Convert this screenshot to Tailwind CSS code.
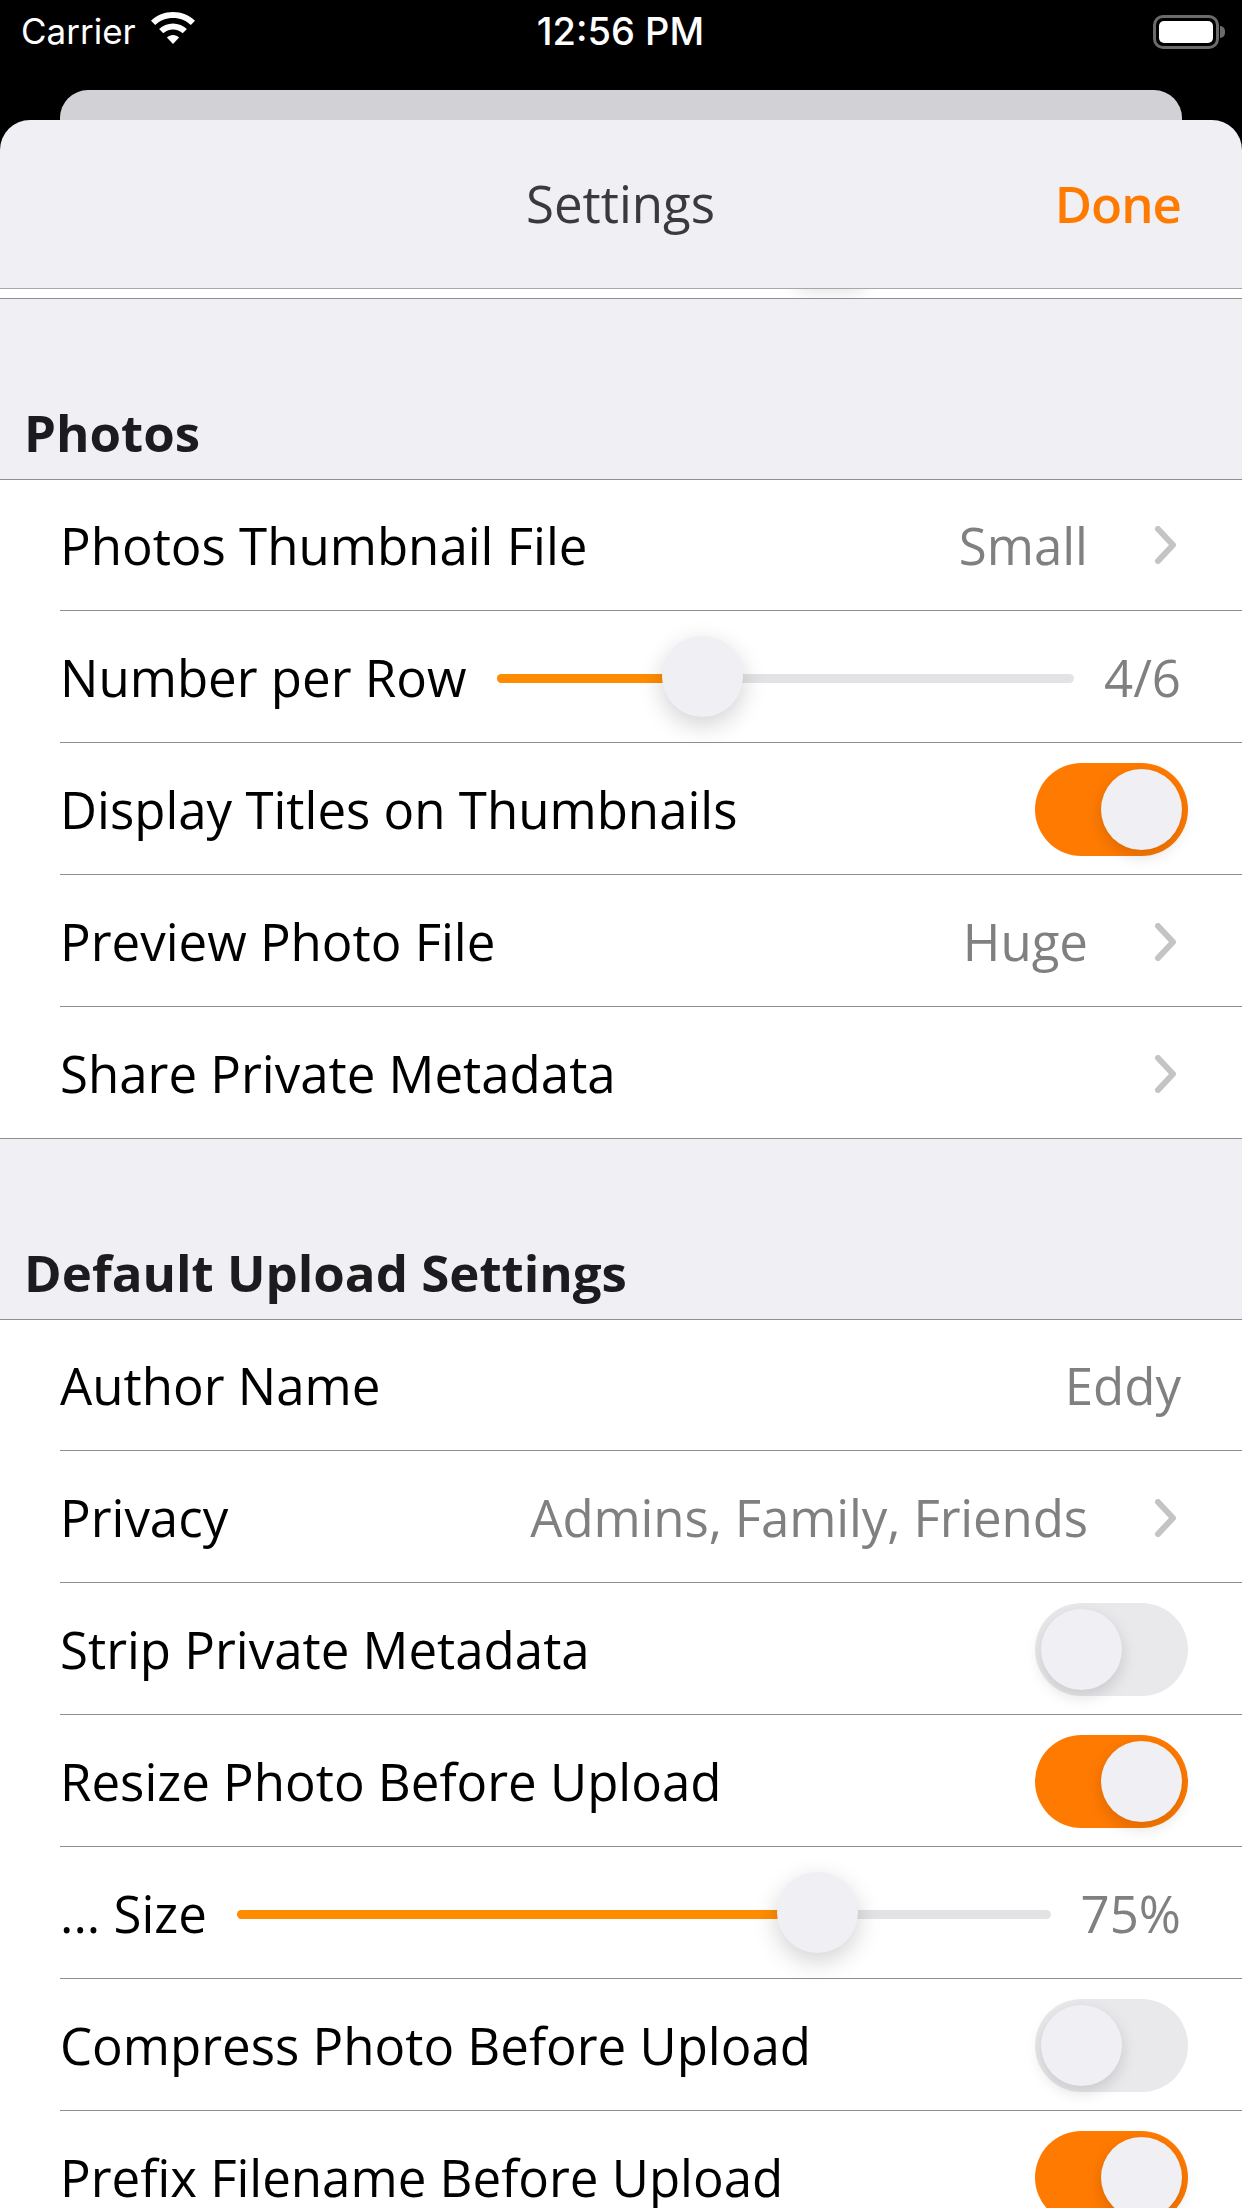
<!DOCTYPE html>
<html lang="en">
  <head>
    <meta charset="UTF-8" />
    <meta name="viewport" content="width=device-width, initial-scale=1.0" />
    <script src="https://cdn.jsdelivr.net/npm/@tailwindcss/browser@4"></script>
    <title>Settings</title>
  </head>

  <body class="w-[1242px] h-[2208px] overflow-hidden bg-black font-['Open_Sans',sans-serif]">
    <!-- status bar -->
    <div class="h-[90px] pl-[21px] pr-[17px] pb-[27px] grid grid-cols-3 items-center text-white font-['Inter',sans-serif] text-[35px]">
      <div class="flex items-center gap-[14px]">
        <span>Carrier</span>
        <svg class="w-[46px] h-[34px] mb-[6px]" viewBox="0 0 46 34" fill="#fff">
          <path d="M23 0C14.500 0 6.800 3.300 1 8.700L5.200 13C9.900 8.600 16.100 6 23 6s13.100 2.600 17.800 7L45 8.700C39.200 3.300 31.500 0 23 0z" />
          <path d="M23 11.500c-5.400 0-10.200 2.100-13.900 5.500l4.200 4.300C15.900 18.900 19.300 17.500 23 17.500s7.100 1.400 9.700 3.800l4.200-4.300C33.200 13.600 28.400 11.500 23 11.500z" />
          <path d="M23 23c-2.400 0-4.500 .9-6.100 2.400L23 32l6.100-6.600C27.500 23.900 25.400 23 23 23z" />
        </svg>
      </div>
      <div class="pr-[5px] text-center text-[38px] font-medium">12:56 PM</div>
      <div class="flex justify-end items-center">
        <div class="w-[66px] h-[34px] p-[3px] border-[3px] border-[#6b6b6b] rounded-[10px]">
          <div class="w-full h-full bg-white rounded-[5px]"></div>
        </div>
        <div class="w-[5px] h-[12px] ml-[1px] bg-[#6b6b6b] rounded-r-full"></div>
      </div>
    </div>

    <div class="mx-[60px] h-[30px] bg-[#d1d1d6] rounded-t-[28px]"></div>

    <div class="bg-[#efeff4] rounded-t-[30px] h-[2088px] overflow-hidden">
      <!-- nav bar -->
      <div class="h-[169px] pb-[1px] pr-[61px] flex items-center border-b border-[#a8a8a8]">
        <div class="relative w-full text-center">
          <span class="pl-[60px] text-[51px] text-[#3a3a3c]">Settings</span>
          <span class="absolute right-0 top-0 text-[51px] font-semibold tracking-[-1px] text-[#ff7a00]">Done</span>
        </div>
      </div>
      <!-- end of the list scrolled under the nav bar -->
      <div class="relative h-[10px] bg-white border-b border-[#8e8e8e] overflow-hidden">
        <div class="absolute left-[795px] top-[-14px] w-[70px] h-[18px] rounded-full bg-black/10 blur-[8px]"></div>
      </div>

      <!-- Photos -->
      <div class="h-[180px] pb-[9px] pl-[24px] flex items-end text-[51px] font-bold text-[#1c1c1e]">Photos</div>
      <div class="bg-white border-y border-[#8e8e8e]">
        <div class="h-[131px] ml-[60px] pr-[65px] flex items-center border-b border-[#8e8e8e]">
          <span class="flex-1 text-[51px] text-black">Photos Thumbnail File</span>
          <span class="text-[51px] text-[#808080]">Small</span>
          <svg class="w-[24px] h-[38px] ml-[65px]" viewBox="0 0 24 38" fill="none" stroke="#c4c4c7" stroke-width="6" stroke-linecap="round" stroke-linejoin="round"><path d="M5 3l15 16L5 35" /></svg>
        </div>
        <div class="h-[132px] pt-[4px] ml-[60px] pr-[61px] flex items-center border-b border-[#8e8e8e]">
          <span class="mb-[2px] text-[51px] text-black">Number per Row</span>
          <div class="relative flex-1 h-[9px] ml-[31px] mr-[30px] bg-[#e3e3e5] rounded-full">
            <div class="w-[170px] h-full bg-[#ff8c00] rounded-l-full"></div>
            <div class="absolute left-[165px] top-[-38px] w-[81px] h-[81px] rounded-full bg-[#efeff4] shadow-[0_8px_24px_rgba(0,0,0,0.18)]"></div>
          </div>
          <span class="mb-[2px] text-[51px] text-[#808080]">4/6</span>
        </div>
        <div class="h-[132px] pt-[2px] ml-[60px] pr-[54px] flex items-center justify-between border-b border-[#8e8e8e]">
          <span class="text-[51px] text-black">Display Titles on Thumbnails</span>
          <div class="w-[153px] h-[93px] p-[6px] flex justify-end rounded-full bg-[#ff7a00]">
            <div class="w-[81px] h-[81px] rounded-full bg-[#efeff4] shadow-[0_6px_16px_rgba(0,0,0,0.14)]"></div>
          </div>
        </div>
        <div class="h-[132px] pt-[2px] ml-[60px] pr-[65px] flex items-center border-b border-[#8e8e8e]">
          <span class="flex-1 text-[51px] text-black">Preview Photo File</span>
          <span class="text-[51px] text-[#808080]">Huge</span>
          <svg class="w-[24px] h-[38px] ml-[65px]" viewBox="0 0 24 38" fill="none" stroke="#c4c4c7" stroke-width="6" stroke-linecap="round" stroke-linejoin="round"><path d="M5 3l15 16L5 35" /></svg>
        </div>
        <div class="h-[131px] pt-[2px] ml-[60px] pr-[65px] flex items-center">
          <span class="flex-1 text-[51px] text-black">Share Private Metadata</span>
          <svg class="w-[24px] h-[38px] ml-[65px]" viewBox="0 0 24 38" fill="none" stroke="#c4c4c7" stroke-width="6" stroke-linecap="round" stroke-linejoin="round"><path d="M5 3l15 16L5 35" /></svg>
        </div>
      </div>

      <!-- Default Upload Settings -->
      <div class="h-[180px] pb-[9px] pl-[24px] flex items-end text-[51px] font-bold text-[#1c1c1e]">Default Upload Settings</div>
      <div class="bg-white border-t border-[#8e8e8e]">
        <div class="h-[131px] ml-[60px] pr-[61px] flex items-center justify-between border-b border-[#8e8e8e]">
          <span class="text-[51px] text-black">Author Name</span>
          <span class="text-[51px] text-[#808080]">Eddy</span>
        </div>
        <div class="h-[132px] pt-[2px] ml-[60px] pr-[65px] flex items-center border-b border-[#8e8e8e]">
          <span class="flex-1 text-[51px] text-black">Privacy</span>
          <span class="text-[51px] tracking-[-0.13px] text-[#808080]">Admins, Family, Friends</span>
          <svg class="w-[24px] h-[38px] ml-[65px]" viewBox="0 0 24 38" fill="none" stroke="#c4c4c7" stroke-width="6" stroke-linecap="round" stroke-linejoin="round"><path d="M5 3l15 16L5 35" /></svg>
        </div>
        <div class="h-[132px] pt-[2px] ml-[60px] pr-[54px] flex items-center justify-between border-b border-[#8e8e8e]">
          <span class="text-[51px] text-black">Strip Private Metadata</span>
          <div class="w-[153px] h-[93px] p-[6px] flex rounded-full bg-[#e9e9eb]">
            <div class="w-[81px] h-[81px] rounded-full bg-[#efeff4] shadow-[0_6px_16px_rgba(0,0,0,0.14)]"></div>
          </div>
        </div>
        <div class="h-[132px] pt-[2px] ml-[60px] pr-[54px] flex items-center justify-between border-b border-[#8e8e8e]">
          <span class="text-[51px] text-black">Resize Photo Before Upload</span>
          <div class="w-[153px] h-[93px] p-[6px] flex justify-end rounded-full bg-[#ff7a00]">
            <div class="w-[81px] h-[81px] rounded-full bg-[#efeff4] shadow-[0_6px_16px_rgba(0,0,0,0.14)]"></div>
          </div>
        </div>
        <div class="h-[132px] pt-[4px] ml-[60px] pr-[61px] flex items-center border-b border-[#8e8e8e]">
          <span class="mb-[2px] text-[51px] text-black">... Size</span>
          <div class="relative flex-1 h-[9px] ml-[30px] mr-[30px] bg-[#e3e3e5] rounded-full">
            <div class="w-[545px] h-full bg-[#ff8c00] rounded-l-full"></div>
            <div class="absolute left-[540px] top-[-38px] w-[81px] h-[81px] rounded-full bg-[#efeff4] shadow-[0_8px_24px_rgba(0,0,0,0.18)]"></div>
          </div>
          <span class="mb-[2px] text-[51px] text-[#808080]">75%</span>
        </div>
        <div class="h-[132px] pt-[2px] ml-[60px] pr-[54px] flex items-center justify-between border-b border-[#8e8e8e]">
          <span class="text-[51px] text-black">Compress Photo Before Upload</span>
          <div class="w-[153px] h-[93px] p-[6px] flex rounded-full bg-[#e9e9eb]">
            <div class="w-[81px] h-[81px] rounded-full bg-[#efeff4] shadow-[0_6px_16px_rgba(0,0,0,0.14)]"></div>
          </div>
        </div>
        <div class="h-[132px] pt-[2px] ml-[60px] pr-[54px] flex items-center justify-between border-b border-[#8e8e8e]">
          <span class="text-[51px] text-black">Prefix Filename Before Upload</span>
          <div class="w-[153px] h-[93px] p-[6px] flex justify-end rounded-full bg-[#ff7a00]">
            <div class="w-[81px] h-[81px] rounded-full bg-[#efeff4] shadow-[0_6px_16px_rgba(0,0,0,0.14)]"></div>
          </div>
        </div>
      </div>
    </div>
  </body>
</html>
